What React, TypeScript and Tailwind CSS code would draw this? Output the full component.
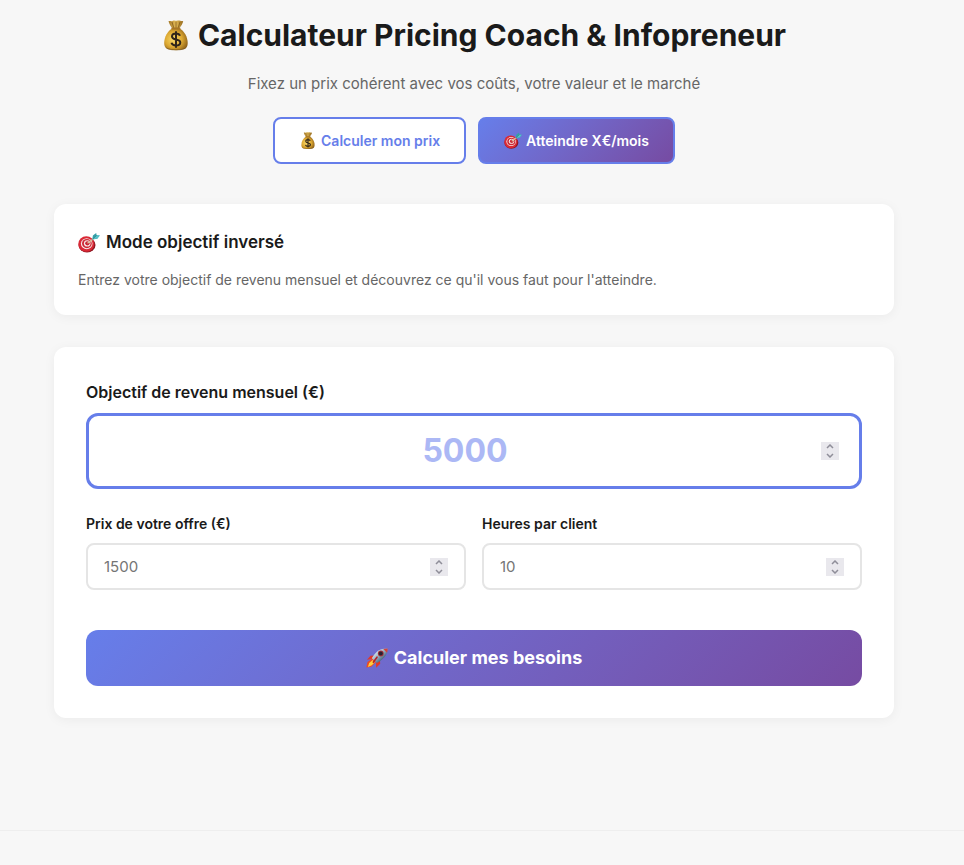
import { useRef, useState } from "react";
import type { FormEvent } from "react";

type IconProps = { className: string };

function MoneyBag({ className }: IconProps) {
  return (
    <svg viewBox="0 0 28 32" className={className} aria-hidden="true">
      <defs>
        <radialGradient id="bag" cx="0.4" cy="0.5" r="0.65">
          <stop offset="0" stopColor="#fbdc6c" />
          <stop offset="0.55" stopColor="#dda932" />
          <stop offset="1" stopColor="#8a5d17" />
        </radialGradient>
        <linearGradient id="bagTop" x1="0" x2="1">
          <stop offset="0" stopColor="#a37829" />
          <stop offset="0.5" stopColor="#e5bd58" />
          <stop offset="1" stopColor="#936618" />
        </linearGradient>
      </defs>
      <path d="M6.500 1.200c1.600-.8 3.200.5 4.500-.4 1.500-.9 3 .4 4.500-.2 1.800-.6 3.400 1 5.700.5-.5 3-2.200 5-4.200 7.600h-6.400C8.700 6.400 7.300 4 6.500 1.200Z" fill="url(#bagTop)" />
      <path d="m10 2 1.800 6M14 1.600V8M18 2l-1.800 6" stroke="#81591a" strokeWidth="0.8" fill="none" />
      <path d="M10.300 8.500h7.200c4.500 2.300 8.200 8.300 8.200 14.500 0 5.500-3.300 7.200-11.700 7.200S2.200 28.500 2.200 23c0-6.200 3.600-12.200 8.100-14.500Z" fill="url(#bag)" />
      <path d="M3.500 26.500c2 3.600 18.500 3.800 21 .2-.8 3.300-5.300 3.600-10.500 3.600s-9.700-.5-10.500-3.800Z" fill="#735019" opacity="0.6" />
      <rect x="9.300" y="7.400" width="9.200" height="2" rx="1" fill="#a87625" />
      <path d="M18 15.800c-.5-1.500-2-2.300-4-2.300-2.300 0-4 1-4 2.900 0 4.300 8.300 1.800 8.300 6 0 2-1.800 3.100-4.300 3.100-2.300 0-4-.9-4.500-2.700M14 11.300v16.400" fill="none" stroke="#30251a" strokeWidth="2" />
    </svg>
  );
}

function Target({ className }: IconProps) {
  return (
    <svg viewBox="0 0 22 20" className={className} aria-hidden="true">
      <ellipse cx="9" cy="12" rx="8.500" ry="7.500" fill="#8f1722" />
      <ellipse cx="8.300" cy="11" rx="8" ry="7.800" fill="#da2936" />
      <ellipse cx="8.700" cy="10.700" rx="5.800" ry="5.500" fill="#f5e9e7" />
      <ellipse cx="8.900" cy="10.600" rx="4.900" ry="4.600" fill="#cd2835" />
      <ellipse cx="9.200" cy="10.400" rx="3.300" ry="3.100" fill="#f7e9e7" />
      <ellipse cx="9.400" cy="10.300" rx="2.200" ry="2.100" fill="#ca2532" />
      <path d="m9.500 10.300 7-5.300" stroke="#d9c6a0" strokeWidth="1.300" />
      <path d="m14.300 6.500.6-4 3.300-2.500.4 2.200 3.200.3-2.600 3.300-4.900.7Z" fill="#35a0a8" />
      <path d="m15 5.800 3.700-3.500 3.100.2-2.600 3.300-4.200.2Z" fill="#55c2c8" />
      <path d="m14.500 6.300 4.200-4" stroke="#28757e" strokeWidth="0.600" />
    </svg>
  );
}

function Rocket({ className }: IconProps) {
  return (
    <svg viewBox="0 0 22 20" className={className} aria-hidden="true">
      <defs>
        <linearGradient id="hull" x1="0" y1="0" x2="1" y2="1">
          <stop offset="0.200" stopColor="#e7f1f5" />
          <stop offset="0.500" stopColor="#8caabd" />
          <stop offset="0.750" stopColor="#405b75" />
        </linearGradient>
      </defs>
      <path d="M9 7.500 4.500 7.800 1 11.700l5.300-.7ZM14 12.500l.2 3.200-4 4.100-.2-5Z" fill="#e23728" />
      <path d="M6.500 10.500 1.500 14 .3 19.500l5-.7 4.700-4.800Z" fill="#ee4b20" />
      <path d="m6.700 12-3.500 3-1.300 4 3.900-1.700 2.900-3Z" fill="#ffd03d" />
      <path d="M21.600.4c.2 5.400-2.300 9.300-10.500 14.600l-5.300-4.700C9.700 3.200 14.300.2 21.600.4Z" fill="url(#hull)" />
      <path d="M21.600.4c.1 1.600-.1 3-.6 4.300L17.300 1c1.300-.4 2.700-.6 4.300-.6Z" fill="#d6413c" />
      <circle cx="14.800" cy="5.500" r="2.900" fill="#a8323a" />
      <circle cx="14.800" cy="5.500" r="2" fill="#2a2230" />
      <path d="m11 9.200-3.700 5" stroke="#b52227" strokeWidth="1.600" strokeLinecap="round" />
    </svg>
  );
}

type NumberFieldProps = {
  id: string;
  label: string;
  placeholder: string;
  large?: boolean;
};

function NumberField({ id, label, placeholder, large = false }: NumberFieldProps) {
  const input = useRef<HTMLInputElement>(null);
  return (
    <div className="min-w-0">
      <label
        htmlFor={id}
        className={large ? "mb-2 block text-base leading-[26px] font-semibold" : "mb-2 block text-sm leading-[22px] font-semibold"}
      >
        {label}
      </label>
      <div
        className={
          large
            ? "flex h-[76px] items-center rounded-xl border-3 border-[#667eea] bg-white px-5"
            : "flex h-[47px] items-center rounded-lg border-2 border-[#e5e5e5] bg-white px-4"
        }
      >
        <input
          ref={input}
          id={id}
          type="number"
          placeholder={placeholder}
          className={
            large
              ? "w-full min-w-0 flex-1 appearance-none text-center text-[32px] leading-10 font-bold text-[#667eea] outline-none [-moz-appearance:textfield] placeholder:text-[#acb8f5] [&::-webkit-inner-spin-button]:appearance-none"
              : "w-full min-w-0 flex-1 appearance-none text-[15px] leading-6 outline-none [-moz-appearance:textfield] placeholder:text-[#757575] [&::-webkit-inner-spin-button]:appearance-none"
          }
        />
        <div className="flex h-[18px] w-[18px] shrink-0 flex-col bg-[#e9e8ed] text-[#8f8e99]">
          <button type="button" aria-label={`Augmenter : ${label}`} onClick={() => input.current?.stepUp()} className="flex h-[9px] items-center justify-center">
            <svg viewBox="0 0 8 5" className="h-[5px] w-2" fill="none" stroke="currentColor" strokeWidth="1.500"><path d="m1 4 3-3 3 3" /></svg>
          </button>
          <button type="button" aria-label={`Diminuer : ${label}`} onClick={() => input.current?.stepDown()} className="flex h-[9px] items-center justify-center">
            <svg viewBox="0 0 8 5" className="h-[5px] w-2" fill="none" stroke="currentColor" strokeWidth="1.500"><path d="m1 1 3 3 3-3" /></svg>
          </button>
        </div>
      </div>
    </div>
  );
}

const activeTab =
  "flex h-[47px] items-center gap-1 rounded-lg border-2 border-[#667eea] bg-linear-135 from-[#667eea] to-[#764ba2] px-6 text-sm font-semibold text-white";
const idleTab =
  "flex h-[47px] items-center gap-1 rounded-lg border-2 border-[#667eea] bg-white px-6 text-sm font-semibold text-[#667eea]";

export default function App() {
  const [mode, setMode] = useState<"price" | "goal">("goal");

  return (
    <div className="min-h-screen bg-[#f7f7f7] font-['Inter','Liberation_Sans',sans-serif] text-[#1a1a1a]">
      <main className="pt-2.5 pr-4">
        <div className="mx-auto max-w-[840px]">
          <header className="text-center">
            <h1 className="mb-2.5 flex items-center justify-center gap-2 text-[30px] leading-[51px] font-bold">
              <MoneyBag className="h-8 w-7 shrink-0" />
              Calculateur Pricing Coach &amp; Infopreneur
            </h1>
            <p className="mb-5 text-[15px] leading-[26px] text-[#666666]">
              Fixez un prix cohérent avec vos coûts, votre valeur et le marché
            </p>
          </header>

          <nav className="mb-10 flex flex-wrap justify-center gap-3" aria-label="Mode de calcul">
            <button type="button" onClick={() => setMode("price")} className={mode === "price" ? activeTab : idleTab}>
              <MoneyBag className="h-[18px] w-[18px]" />
              Calculer mon prix
            </button>
            <button type="button" onClick={() => setMode("goal")} className={mode === "goal" ? activeTab : idleTab}>
              <Target className="h-[18px] w-[18px]" />
              Atteindre X€/mois
            </button>
          </nav>

          <section className="mb-8 rounded-xl bg-white p-6 shadow-[0_2px_12px_rgba(0,0,0,0.05)]">
            <h2 className="mb-3 flex items-center gap-1.5 text-[17px] leading-[29px] font-semibold">
              <Target className="h-5 w-[22px]" />
              Mode objectif inversé
            </h2>
            <p className="text-sm leading-[22px] text-[#666666]">
              Entrez votre objectif de revenu mensuel et découvrez ce qu'il vous faut pour l'atteindre.
            </p>
          </section>

          <form
            onSubmit={(event: FormEvent) => event.preventDefault()}
            className="rounded-xl bg-white p-8 shadow-[0_2px_12px_rgba(0,0,0,0.05)]"
          >
            <NumberField id="revenue" label="Objectif de revenu mensuel (€)" placeholder="5000" large />
            <div className="mt-6 mb-10 grid grid-cols-2 gap-4">
              <NumberField id="price" label="Prix de votre offre (€)" placeholder="1500" />
              <NumberField id="hours" label="Heures par client" placeholder="10" />
            </div>
            <button
              type="submit"
              className="flex h-14 w-full items-center justify-center gap-1.5 rounded-xl bg-linear-135 from-[#667eea] to-[#764ba2] text-lg font-bold text-white"
            >
              <Rocket className="h-5 w-[22px]" />
              Calculer mes besoins
            </button>
          </form>
        </div>
      </main>
      <footer className="mt-28 border-t border-[#eeeeee]" />
    </div>
  );
}
